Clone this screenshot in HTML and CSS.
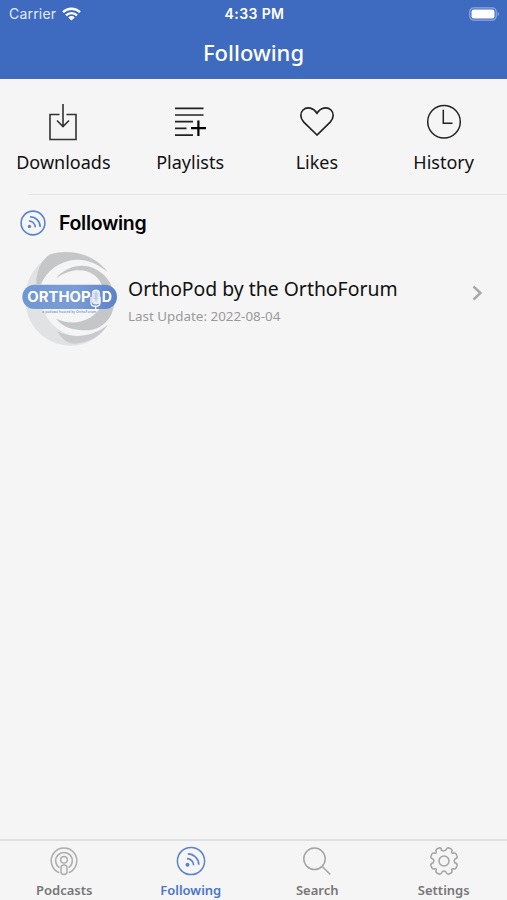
FILE: index.html
```html
<!DOCTYPE html>
<html lang="en">

<head>
    <meta charset="utf-8">
    <meta name="viewport" content="width=device-width, initial-scale=1.0">
    <title>Following</title>

    <link rel="stylesheet" href="styles.css">
</head>

<body>

    <header>
        <div class="status">
            <div class="carrier">
                <span>Carrier</span>
                <svg width="19" height="14" viewBox="0 0 19 14" fill="none" stroke="#fff" stroke-width="2.4">
                    <path d="M1 5.2a12.2 12.2 0 0 1 17 0M4 8.3a8 8 0 0 1 11 0" />
                    <path d="M9.500 13.500L6.300 10.400a4.600 4.600 0 0 1 6.400 0z" fill="#fff" stroke="none" />
                </svg>
            </div>
            <span class="time">4:33 PM</span>
            <svg class="battery" width="31" height="14" viewBox="0 0 31 14">
                <rect x=".8" y=".8" width="26.400" height="12.400" rx="4" fill="none" stroke="#8fa9df" stroke-width="1.200" />
                <rect x="2.500" y="2.500" width="23" height="9" rx="2.300" fill="#fff" />
                <path d="M28.700 5v4c1.700-.7 1.700-3.300 0-4z" fill="#8fa9df" />
            </svg>
        </div>
        <h1>Following</h1>
    </header>

    <main>
        <nav class="shortcuts">
            <a class="shortcut">
                <svg width="36" height="40" viewBox="0 0 36 40" fill="none" stroke="#333" stroke-width="1.600">
                    <path d="M14.500 12.500H5v25h26v-25h-9.500M18 2v22M12 18.500l6 6 6-6" />
                </svg>
                <span>Downloads</span>
            </a>
            <a class="shortcut">
                <svg width="36" height="40" viewBox="0 0 36 40" fill="none" stroke="#222" stroke-width="1.700">
                    <path d="M3 6.300h28.500M3 13h28.500M3 19.700h18M3 26.400h11.500M3 33.200h18" />
                    <path d="M19 26.200h15M26.400 18.500v15.500" stroke="#000" stroke-width="2.200" />
                </svg>
                <span>Playlists</span>
            </a>
            <a class="shortcut">
                <svg width="36" height="40" viewBox="0 0 36 40" fill="none" stroke="#222" stroke-width="1.700">
                    <path d="M18 33L4.800 20.200C1.200 16.400.8 11 4 8c4-3.800 10.500-2.400 14 3.200C21.500 5.600 28 4.200 32 8c3.200 3 2.800 8.400-.8 12.200z" />
                </svg>
                <span>Likes</span>
            </a>
            <a class="shortcut">
                <svg width="36" height="40" viewBox="0 0 36 40" fill="none" stroke="#222" stroke-width="1.500">
                    <circle cx="18" cy="19.700" r="16.300" />
                    <path d="M17.300 7.700v13.500h9.200" />
                </svg>
                <span>History</span>
            </a>
        </nav>

        <section class="following">
            <div class="heading">
                <svg width="26" height="26" viewBox="0 0 28 28" fill="none" stroke="#5b82cf" stroke-width="1.700">
                    <circle cx="14" cy="14" r="12.800" />
                    <circle cx="10.200" cy="17.800" r="1.800" fill="#5b82cf" stroke="none" />
                    <path d="M9.500 11.900a6.400 6.400 0 0 1 6.800 6.800M10.700 7.200a11 11 0 0 1 11 11" />
                </svg>
                <h2>Following</h2>
            </div>

            <article class="podcast">
                <svg class="logo" width="96" height="96" viewBox="66 153 288 288">
                    <defs>
                        <linearGradient id="pill" x1="0" x2="1">
                            <stop offset="0" stop-color="#6f96d4" />
                            <stop offset=".55" stop-color="#7b9dd6" />
                            <stop offset="1" stop-color="#5a83c9" />
                        </linearGradient>
                    </defs>
                    <path d="M190 158C120 168 76 228 76 297c0 82 62 140 138 140 50 0 88-28 108-62-28 32-70 44-112 30-52-16-88-66-90-120-2-58 22-98 70-127z" fill="#e1e2e4" />
                    <path d="M109 252c0-40 14-72 42-89 62-20 134 2 172 53-44-36-90-46-134-28-32 13-54 36-66 64z" fill="#c5c6c8" />
                    <path d="M168 235c32-38 84-48 122-26 36 20 54 54 53 97-2 48-38 85-83 85-38 0-72-8-92-35 32 15 70 16 102-3 34-20 48-54 40-86-14-54-76-78-142-32z" fill="#c5c6c8" />
                    <path d="M172 394c38 20 98 22 152-20-24 36-62 56-104 57-22-3-38-17-48-37z" fill="#c9cacc" />
                    <rect x="67" y="254" width="284" height="73" rx="36" fill="url(#pill)" />
                    <text class="brand" x="82" y="305" textLength="190" lengthAdjust="spacingAndGlyphs">ORTHOP</text>
                    <text class="brand" x="305" y="305">D</text>
                    <g fill="#e4ebf6" stroke="#fff" stroke-width="2">
                        <rect x="277" y="270" width="22" height="42" rx="9" />
                        <path d="M273 290v18c0 14 27 14 27 0v-18M287 318v16" fill="none" stroke-width="4" />
                    </g>
                    <path d="M281 281h14M281 288h14M281 295h14M288 274v31" stroke="#9eb5db" stroke-width="2" />
                    <text class="tagline" x="127" y="338" textLength="162" lengthAdjust="spacingAndGlyphs">a podcast hosted by OrthoForum</text>
                </svg>
                <div class="info">
                    <h3>OrthoPod by the OrthoForum</h3>
                    <p>Last Update: 2022-08-04</p>
                </div>
                <svg class="chevron" width="11" height="16" viewBox="0 0 11 16" fill="none" stroke="#a8a8a8" stroke-width="2.400">
                    <path d="M1.500 1.500L8.500 8l-7 6.500" />
                </svg>
            </article>
        </section>
    </main>

    <footer>
        <a class="tab">
            <svg width="30" height="30" viewBox="0 0 30 30" fill="none" stroke="#adadad" stroke-width="1.500">
                <path d="M10.300 26.700a12.800 12.800 0 1 1 9.400 0" />
                <path d="M10.500 21.700a8.300 8.300 0 1 1 9 0" />
                <circle cx="15" cy="13.800" r="3.300" />
                <rect x="12" y="19" width="6" height="9.500" rx="3" />
            </svg>
            <span>Podcasts</span>
        </a>
        <a class="tab active">
            <svg width="30" height="30" viewBox="0 0 30 30" fill="none" stroke="#5b82cf" stroke-width="1.500">
                <circle cx="15" cy="15" r="13.600" />
                <circle cx="11.500" cy="18.800" r="2" fill="#5b82cf" stroke="none" />
                <path d="M11 12.700a6.500 6.500 0 0 1 6.600 6.600M11.800 7.800c6 0 11 4.900 11 10.900" stroke-width="1.700" />
            </svg>
            <span>Following</span>
        </a>
        <a class="tab">
            <svg width="30" height="30" viewBox="0 0 30 30" fill="none" stroke="#a4a4a4" stroke-width="1.500">
                <circle cx="12.500" cy="12.800" r="10.700" />
                <path d="M20 20.300l8.300 8.200" />
            </svg>
            <span>Search</span>
        </a>
        <a class="tab">
            <svg width="30" height="30" viewBox="0 0 30 30" fill="none" stroke="#a4a4a4" stroke-width="1.500" stroke-linejoin="round">
                <path d="M12.300 4.200Q12.600 1.700 10.700 1.800L7.800 3Q6.300 4 7.300 6.200Q7.300 7.400 6.200 7.300Q4 6.300 3 7.800L1.800 10.700Q1.600 12.300 4.200 13.200Q5.600 15 4.200 16.800Q1.600 17.700 1.800 19.300L3 22.200Q4 23.700 6.200 22.700Q7.600 22.600 7.300 23.800Q6.300 26 7.800 27L10.700 28.200Q12.300 28.400 13.200 25.800Q15 24.400 16.800 25.800Q17.700 28.400 19.300 28.200L22.200 27Q23.700 26 22.700 23.800Q22.600 22.600 23.800 22.700Q26 23.700 27 22.200L28.200 19.300Q28.400 17.700 25.800 16.800Q24.400 15 25.800 13.200Q28.400 12.300 28.200 10.700L27 7.800Q26 6.300 23.800 7.300Q22.600 7.400 22.700 6.200Q23.700 4 22.200 3L19.300 1.800Q17.700 1.600 16.800 4.200Q14.600 5.600 12.300 4.200z" />
                <circle cx="15" cy="15" r="5" />
            </svg>
            <span>Settings</span>
        </a>
    </footer>

</body>

</html>
```
FILE: styles.css
```css
* {
    box-sizing: border-box;
}

body {
    margin: 0;
    height: 100vh;
    display: flex;
    flex-direction: column;
    background: #f5f5f5;
    color: #111;
    font-family: "Noto Sans", sans-serif;
}

svg {
    display: block;
    flex-shrink: 0;
}

h1,
h2,
h3,
p {
    margin: 0;
}

header {
    height: 79px;
    background: #3e6bc0;
    color: #fff;
}

.status {
    display: grid;
    grid-template-columns: 1fr auto 1fr;
    align-items: center;
    height: 27px;
    padding: 0 7px 0 9px;
    font-family: Inter, sans-serif;
    font-size: 14px;
}

.carrier {
    display: flex;
    align-items: center;
    gap: 6px;
    color: #e3eaf7;
    letter-spacing: 0.2px;
}

.time {
    font-weight: 600;
    letter-spacing: 0.4px;
}

.battery {
    justify-self: end;
}

h1 {
    font-size: 22px;
    font-weight: 500;
    line-height: 50px;
    text-align: center;
}

main {
    flex: 1;
}

.shortcuts {
    display: grid;
    grid-template-columns: repeat(4, 1fr);
    height: 115px;
    padding-top: 23px;
}

.shortcut {
    display: flex;
    flex-direction: column;
    align-items: center;
    gap: 7px;
    font-size: 18px;
    line-height: 26px;
}

.following {
    border-top: 1px solid #e4e4e4;
    margin-left: 28px;
}

.heading {
    display: flex;
    align-items: center;
    gap: 13px;
    height: 56px;
    margin-left: -8px;
}

h2 {
    font-family: Inter, sans-serif;
    font-size: 19.5px;
    font-weight: 600;
    letter-spacing: -0.3px;
    color: #000;
}

.podcast {
    display: flex;
    align-items: center;
    height: 96px;
    margin: 0 24px 0 -6px;
}

.brand {
    font-family: Inter, sans-serif;
    font-size: 42px;
    font-weight: 700;
    fill: #fff;
}

.tagline {
    font-size: 9px;
    font-weight: 600;
    fill: #7b9dd6;
}

.info {
    flex: 1;
    margin-left: 10px;
    padding-top: 3px;
}

h3 {
    font-size: 19.4px;
    font-weight: 400;
    line-height: 30px;
}

.info p {
    font-size: 13.4px;
    line-height: 24px;
    color: #999;
}

.chevron {
    margin-bottom: 13px;
}

footer {
    display: grid;
    grid-template-columns: repeat(4, 1fr);
    height: 61px;
    padding: 5px 0 0 1px;
    border-top: 2px solid #e0e0e0;
}

.tab {
    display: flex;
    flex-direction: column;
    align-items: center;
    gap: 4px;
    color: #777;
    font-size: 13px;
    font-weight: 600;
    line-height: 20px;
}

.active {
    color: #4b76c8;
}
```
